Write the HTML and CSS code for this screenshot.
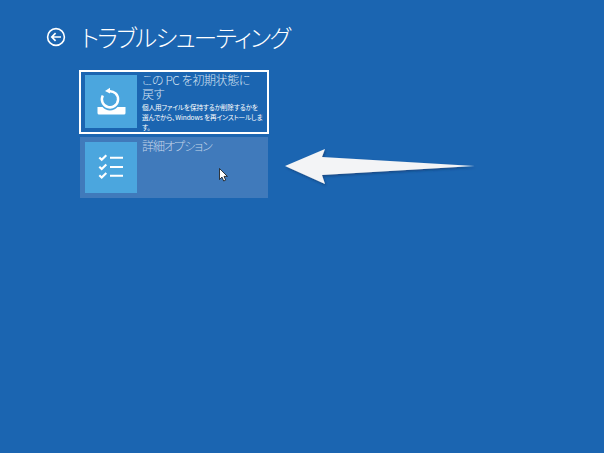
FILE: index.html
```html
<!DOCTYPE html>
<html lang="ja">
<head>
<meta charset="utf-8">
<title>トラブルシューティング</title>
<link rel="stylesheet" href="styles.css">
</head>
<body>
<header class="head">
  <svg class="back" width="20" height="20" viewBox="0 0 20 20"><circle cx="10" cy="10" r="8.400" fill="none" stroke="#fff" stroke-width="1.600"/><path d="M15 10H6M9.600 6.200 5.800 10l3.800 3.800" fill="none" stroke="#fff" stroke-width="1.700"/></svg>
  <h1 class="title">トラブルシューティング</h1>
</header>
<main class="cards">
  <section class="card card-selected">
    <div class="tile">
      <svg width="52" height="53" viewBox="0 0 52 53"><path d="M12.500 32H17.500a10 10 0 0 0 15 0h8v6a1.500 1.500 0 0 1-1.500 1.500H14a1.500 1.500 0 0 1-1.500-1.500z" fill="#fff"/><path d="M24 16.200A8.100 8.100 0 1 1 17.800 20.500" fill="none" stroke="#fff" stroke-width="2.500"/><path d="M25 12.800v5.800l-5-2.700z" fill="#fff"/></svg>
    </div>
    <div class="text">
      <div class="name">この PC を初期状態に<br>戻す</div>
      <div class="desc">個人用ファイルを保持するか削除するかを選んでから、Windows を再インストールします。</div>
    </div>
  </section>
  <section class="card card-hover">
    <div class="tile">
      <svg width="52" height="51" viewBox="0 0 52 51"><path d="M14.300 15.500l2.400 2.300 4.600-4.600M14.300 24.700l2.400 2.300 4.600-4.600M14.300 33.300l2.400 2.300 4.600-4.600" fill="none" stroke="#fff" stroke-width="2.100"/><path d="M25 15.700h13M25 25h13M25 33.700h13" stroke="#fff" stroke-width="1.900"/></svg>
    </div>
    <div class="text">
      <div class="name">詳細オプション</div>
    </div>
  </section>
</main>
<svg class="cursor" width="10" height="15" viewBox="0 0 10 15"><path d="M.5.500v11l2.500-2.400 1.700 3.900 2-.9-1.700-3.700h3.400z" fill="#fff" stroke="#111" stroke-width=".8"/></svg>
<svg class="arrow" width="194" height="40" viewBox="0 0 194 40"><defs><filter id="s" x="-5%" y="-20%" width="110%" height="150%"><feDropShadow dx="1" dy="1.500" stdDeviation="1" flood-color="#0a2f5c" flood-opacity=".55"/></filter></defs><path d="M0 18 40 1 37 9 189.500 18 37 27 40 36z" fill="#f3f4f6" filter="url(#s)"/></svg>
</body>
</html>
```
FILE: styles.css
```css
html, body {
  margin: 0;
  height: 100%;
}
body {
  position: relative;
  width: 604px;
  height: 453px;
  overflow: hidden;
  background: #1b65b1;
  color: #fff;
  font-family: "Noto Sans CJK JP", "Open Sans", sans-serif;
  font-feature-settings: "palt";
}
.head {
  display: flex;
  align-items: center;
  gap: 15px;
  height: 38px;
  padding: 18px 0 0 46px;
}
.back {
  flex: none;
}
.title {
  margin: 0;
  font-size: 23.500px;
  font-weight: 300;
  line-height: 38px;
  letter-spacing: -1.600px;
  white-space: nowrap;
}
.cards {
  display: flex;
  flex-direction: column;
  gap: 3px;
  width: 190px;
  margin: 14px 0 0 79px;
}
.card {
  display: flex;
  box-sizing: border-box;
  gap: 5px;
}
.card-selected {
  height: 64px;
  border: 2px solid #fff;
  padding: 3px 4px;
}
.card-hover {
  width: 188px;
  height: 61px;
  margin-left: 1px;
  padding: 5px;
  background: #407abb;
}
.tile {
  flex: none;
  width: 52px;
  background: #4ba6de;
}
.card-selected .tile {
  height: 53px;
}
.card-hover .tile {
  height: 51px;
}
.tile svg {
  display: block;
}
.text {
  min-width: 0;
  margin-top: -2px;
}
.name {
  font-size: 12px;
  font-weight: 300;
  line-height: 14px;
  letter-spacing: -.4px;
  color: #d5e3f2;
}
.card-hover .name {
  margin-top: -1px;
  letter-spacing: -1px;
  color: #c3d5ea;
}
.desc {
  margin-top: 1px;
  font-size: 6.600px;
  line-height: 10px;
  letter-spacing: -.1px;
  color: #fff;
}
.cursor {
  position: absolute;
  left: 219px;
  top: 168px;
}
.arrow {
  position: absolute;
  left: 285px;
  top: 148px;
}
```
